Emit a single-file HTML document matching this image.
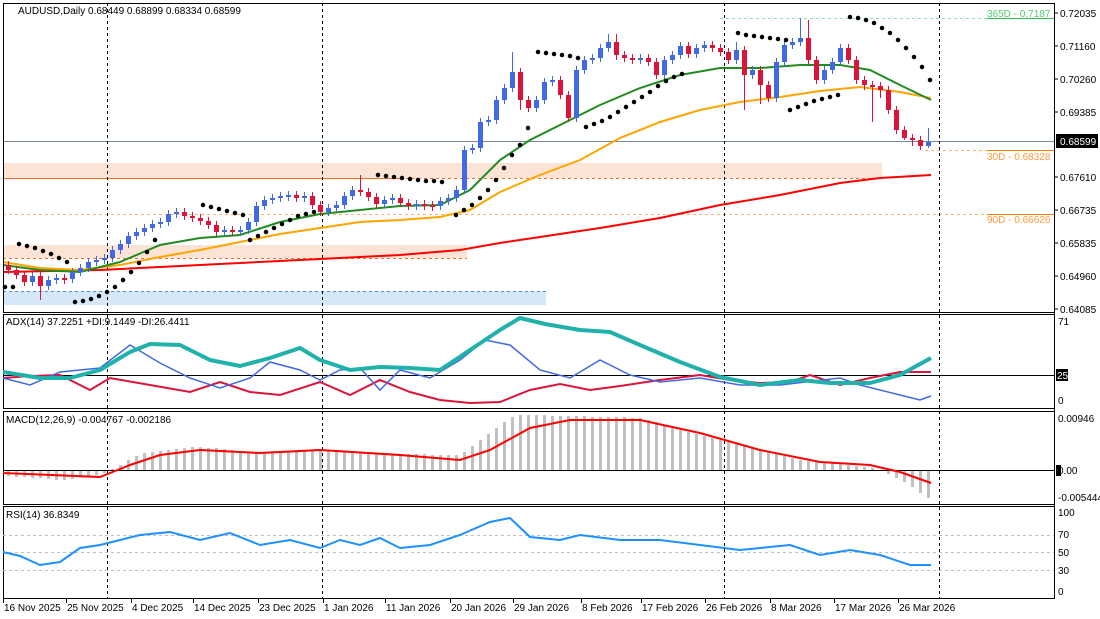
<!DOCTYPE html>
<html><head><meta charset="utf-8">
<style>
html,body{margin:0;padding:0;background:#fff;}
svg{display:block;font-family:"Liberation Sans",sans-serif;font-size:10px;}
</style></head>
<body>
<svg width="1100" height="619" viewBox="0 0 1100 619" xmlns="http://www.w3.org/2000/svg">
<rect x="0" y="0" width="1100" height="619" fill="#fff"/>
<!-- bands -->
<rect x="3" y="163" width="879" height="15" fill="#fbe3d6"/>
<rect x="3" y="245" width="464" height="13" fill="#fbe3d6"/>
<rect x="3" y="291" width="543" height="14" fill="#d6e7f8"/>
<line x1="3" y1="178.5" x2="400" y2="178.5" stroke="#f07030"/>
<line x1="400" y1="178.5" x2="882" y2="178.5" stroke="#f07030" stroke-dasharray="3,3"/>
<line x1="3" y1="258.5" x2="467" y2="258.5" stroke="#f07030" stroke-dasharray="3,3"/>
<line x1="3" y1="291.5" x2="546" y2="291.5" stroke="#4a90e0" stroke-dasharray="3,3"/>
<line x1="3" y1="214.5" x2="987" y2="214.5" stroke="#ffb070" stroke-dasharray="3,3"/>
<line x1="987" y1="214.5" x2="1054" y2="214.5" stroke="#ff8000"/>
<line x1="925" y1="150.5" x2="987" y2="150.5" stroke="#ffb070" stroke-dasharray="3,3"/>
<line x1="987" y1="150.5" x2="1054" y2="150.5" stroke="#ff8000"/>
<line x1="720" y1="18.5" x2="987" y2="18.5" stroke="#90e0a8" stroke-dasharray="3,3"/>
<line x1="987" y1="18.5" x2="1054" y2="18.5" stroke="#30c050"/>
<line x1="3" y1="141.5" x2="1054" y2="141.5" stroke="#778899"/>
<!-- vertical dashed -->
<g stroke="#000" stroke-dasharray="3,3">
<line x1="107.5" y1="3" x2="107.5" y2="598"/>
<line x1="322.5" y1="3" x2="322.5" y2="598"/>
<line x1="724.5" y1="3" x2="724.5" y2="598"/>
<line x1="939.5" y1="3" x2="939.5" y2="598"/>
</g>
<!-- MAs -->
<polyline fill="none" stroke="#ff0000" stroke-width="2" points="3,272 100,270 200,265 300,260 400,255 460,250 500,243 540,237 600,228 660,218 720,205 780,195 840,183 880,178 931,175"/>
<polyline fill="none" stroke="#ffa500" stroke-width="2" points="3,262 40,268 80,270 120,265 160,257 200,250 240,242 280,234 320,228 360,222 400,220 440,217 470,210 500,192 540,175 580,160 620,138 660,122 700,110 740,102 780,97 820,91 860,87 900,92 931,98"/>
<polyline fill="none" stroke="#228b22" stroke-width="2" points="3,265 40,270 80,272 120,262 160,245 200,238 240,235 280,222 320,214 360,210 400,206 440,205 470,190 500,160 530,140 560,125 600,105 640,88 680,75 720,68 760,68 800,65 840,65 870,70 900,85 931,100"/>
<!-- wicks -->
<path fill="none" stroke="#4169e1" d="M32.5 272V286M48.5 276V290M56.5 274V284M72.5 268V283M80.5 264V276M88.5 258V272M96.5 256V266M104.5 254V264M112.5 246V262M120.5 240V254M128.5 232V248M136.5 228V240M144.5 224V236M152.5 220V232M160.5 218V228M168.5 210V226M176.5 208V218M224.5 226V236M240.5 226V236M248.5 218V234M256.5 202V226M264.5 196V210M272.5 194V204M280.5 192V202M288.5 191V201M304.5 192V202M328.5 204V216M336.5 201V212M344.5 192V209M352.5 186V200M384.5 196V208M392.5 194V204M416.5 200V210M440.5 197V210M448.5 194V205M456.5 186V202M464.5 146V194M472.5 144V154M480.5 118V152M488.5 116V126M496.5 96V124M504.5 84V104M512.5 52V92M536.5 96V112M544.5 78V104M552.5 76V86M576.5 66V122M584.5 56V74M592.5 54V64M600.5 44V62M608.5 34V52M640.5 54V64M664.5 56V79M672.5 51V64M680.5 42V59M696.5 44V58M704.5 41V52M736.5 42V64M752.5 66V79M776.5 58V102M784.5 41V66M792.5 38V49M800.5 18V46M824.5 66V84M832.5 58V74M840.5 44V66M928.5 128V148"/>
<path fill="none" stroke="#dc143c" d="M8.5 261V274M16.5 266V279M24.5 271V286M40.5 272V300M64.5 274V284M184.5 208V220M192.5 212V222M200.5 214V225M208.5 217V229M216.5 221V236M232.5 226V236M296.5 191V202M312.5 192V209M320.5 201V216M360.5 175V196M368.5 188V201M376.5 193V208M400.5 194V207M408.5 199V210M424.5 200V210M432.5 201V211M520.5 68V110M528.5 96V112M560.5 76V99M568.5 91V122M616.5 34V60M624.5 51V62M632.5 54V64M648.5 54V66M656.5 58V79M688.5 42V58M712.5 41V52M720.5 44V56M728.5 48V64M744.5 46V110M760.5 66V104M768.5 81V102M808.5 20V64M816.5 56V84M848.5 44V64M856.5 56V84M864.5 76V90M872.5 81V122M880.5 82V98M888.5 86V114M896.5 106V134M904.5 126V140M912.5 134V146M920.5 136V150"/>
<!-- bodies -->
<path fill="#4169e1" d="M30 276h5v6h-5zM46 280h5v6h-5zM54 278h5v2h-5zM70 272h5v7h-5zM78 268h5v4h-5zM86 262h5v6h-5zM94 260h5v2h-5zM102 258h5v2h-5zM110 250h5v8h-5zM118 244h5v6h-5zM126 236h5v8h-5zM134 232h5v4h-5zM142 228h5v4h-5zM150 224h5v4h-5zM158 222h5v2h-5zM166 214h5v8h-5zM174 212h5v2h-5zM222 230h5v2h-5zM238 230h5v2h-5zM246 222h5v8h-5zM254 206h5v16h-5zM262 200h5v6h-5zM270 198h5v2h-5zM278 196h5v2h-5zM286 195h5v2h-5zM302 196h5v2h-5zM326 208h5v4h-5zM334 205h5v3h-5zM342 196h5v9h-5zM350 190h5v6h-5zM382 200h5v4h-5zM390 198h5v2h-5zM414 204h5v2h-5zM438 201h5v5h-5zM446 198h5v3h-5zM454 190h5v8h-5zM462 150h5v40h-5zM470 148h5v2h-5zM478 122h5v26h-5zM486 120h5v2h-5zM494 100h5v20h-5zM502 88h5v12h-5zM510 72h5v16h-5zM534 100h5v8h-5zM542 82h5v18h-5zM550 80h5v2h-5zM574 70h5v48h-5zM582 60h5v10h-5zM590 58h5v2h-5zM598 48h5v10h-5zM606 42h5v6h-5zM638 58h5v2h-5zM662 60h5v15h-5zM670 55h5v5h-5zM678 46h5v9h-5zM694 48h5v6h-5zM702 45h5v3h-5zM734 50h5v10h-5zM750 70h5v5h-5zM774 62h5v36h-5zM782 45h5v17h-5zM790 42h5v3h-5zM798 38h5v4h-5zM822 70h5v10h-5zM830 62h5v8h-5zM838 48h5v14h-5zM926 142h5v4h-5z"/>
<path fill="#dc143c" d="M6 265h5v5h-5zM14 270h5v5h-5zM22 275h5v7h-5zM38 276h5v10h-5zM62 278h5v2h-5zM182 212h5v4h-5zM190 216h5v2h-5zM198 218h5v3h-5zM206 221h5v4h-5zM214 225h5v7h-5zM230 230h5v2h-5zM294 195h5v3h-5zM310 196h5v9h-5zM318 205h5v7h-5zM358 190h5v2h-5zM366 192h5v5h-5zM374 197h5v7h-5zM398 198h5v5h-5zM406 203h5v3h-5zM422 204h5v2h-5zM430 205h5v2h-5zM518 72h5v28h-5zM526 100h5v8h-5zM558 80h5v15h-5zM566 95h5v23h-5zM614 42h5v13h-5zM622 55h5v3h-5zM630 58h5v2h-5zM646 58h5v4h-5zM654 62h5v13h-5zM686 46h5v8h-5zM710 45h5v3h-5zM718 48h5v4h-5zM726 52h5v8h-5zM742 50h5v25h-5zM758 70h5v15h-5zM766 85h5v13h-5zM806 38h5v22h-5zM814 60h5v20h-5zM846 48h5v12h-5zM854 60h5v20h-5zM862 80h5v5h-5zM870 85h5v2h-5zM878 86h5v4h-5zM886 90h5v20h-5zM894 110h5v20h-5zM902 130h5v8h-5zM910 138h5v2h-5zM918 140h5v6h-5z"/>
<!-- SAR -->
<path fill="none" stroke="#000" stroke-width="4.5" stroke-linecap="round" d="M5 287h0M13 287h0M19 244h0M27 246h0M35 248h0M43 251h0M51 254h0M59 258h0M67 262h0M75 302h0M83 301h0M91 299h0M99 296h0M107 292h0M115 287h0M123 280h0M131 272h0M139 263h0M147 252h0M155 240h0M203 205h0M211 207h0M219 209h0M227 211h0M235 213h0M243 215h0M250 240h0M258 236h0M266 232h0M274 228h0M282 224h0M290 220h0M298 216h0M306 214h0M314 212h0M378 175h0M386 176h0M394 177h0M402 178h0M410 179h0M418 180h0M426 181h0M434 181h0M442 182h0M456 215h0M464 210h0M472 205h0M480 198h0M488 190h0M496 180h0M504 168h0M512 155h0M520 145h0M528 128h0M538 52h0M546 53h0M554 54h0M562 55h0M570 56h0M578 58h0M586 127h0M594 124h0M602 121h0M610 117h0M618 112h0M626 107h0M634 102h0M642 97h0M650 92h0M658 86h0M666 81h0M674 77h0M682 74h0M738 33h0M746 35h0M754 36h0M762 37h0M770 38h0M778 39h0M786 40h0M790 110h0M798 107h0M806 104h0M814 101h0M822 99h0M830 97h0M838 95h0M850 17h0M858 18h0M866 20h0M874 23h0M882 28h0M890 33h0M898 40h0M906 48h0M914 57h0M922 67h0M930 80h0"/>
<!-- right axis -->
<line x1="1054.5" y1="3" x2="1054.5" y2="598" stroke="#000"/>
<g fill="#000" stroke="#000">
<path d="M1054 13h4M1054 46h4M1054 79h4M1054 112h4M1054 177h4M1054 210h4M1054 243h4M1054 276h4M1054 309h4"/>
</g>
<g fill="#000">
<text x="1060" y="17">0.72035</text>
<text x="1060" y="50">0.71160</text>
<text x="1060" y="83">0.70260</text>
<text x="1060" y="116">0.69385</text>
<text x="1060" y="181">0.67610</text>
<text x="1060" y="214">0.66735</text>
<text x="1060" y="247">0.65835</text>
<text x="1060" y="280">0.64960</text>
<text x="1060" y="313">0.64085</text>
</g>
<rect x="1056" y="134" width="42" height="14" fill="#000"/><text x="1060" y="145" fill="#fff">0.68599</text>
<text x="987" y="17" fill="#50d070">365D - 0.7187</text>
<text x="987" y="160" fill="#ff9a40">30D - 0.68328</text>
<text x="987" y="223" fill="#ff9a40">90D - 0.66626</text>
<text x="18" y="14" fill="#000">AUDUSD,Daily  0.68449 0.68899 0.68334 0.68599</text>
<!-- frames -->
<g fill="none" stroke="#000">
<rect x="3.5" y="3.5" width="1051" height="309"/>
<rect x="3.5" y="314.5" width="1051" height="94"/>
<rect x="3.5" y="411.5" width="1051" height="93"/>
<rect x="3.5" y="506.5" width="1051" height="92"/>
</g>
<!-- ADX -->
<line x1="3" y1="375.5" x2="1054" y2="375.5" stroke="#000"/>
<polyline fill="none" stroke="#dc143c" stroke-width="2" points="3,378 30,376 60,375 90,390 110,378 150,385 190,392 220,382 250,392 280,395 320,382 350,395 380,380 410,392 440,400 470,403 500,402 530,390 560,384 590,390 620,386 660,380 700,375 730,380 760,383 790,382 810,375 840,385 870,378 900,372 931,372"/>
<polyline fill="none" stroke="#4169e1" stroke-width="1.5" points="3,378 30,385 60,372 100,368 130,345 160,363 190,378 220,388 250,378 270,362 300,370 320,380 340,370 360,368 380,390 400,370 430,378 460,360 485,340 510,345 540,370 570,378 600,360 630,375 660,382 700,378 740,385 780,385 840,378 860,385 900,395 920,400 931,396"/>
<polyline fill="none" stroke="#20b2aa" stroke-width="4" stroke-linejoin="round" points="3,372 40,378 70,378 100,370 130,352 150,344 180,345 210,360 240,366 270,358 300,348 320,360 350,370 380,367 410,368 440,370 470,350 500,330 520,318 545,324 580,330 610,332 640,345 680,362 720,377 760,385 800,380 830,383 870,383 900,375 931,358"/>
<text x="6" y="325" fill="#000">ADX(14) 37.2251 +DI:9.1449 -DI:26.4411</text>
<text x="1058" y="325" fill="#000">71</text>
<rect x="1056" y="369" width="12" height="12" fill="#000"/><text x="1057" y="379" fill="#fff">25</text>
<text x="1058" y="404" fill="#000">0</text>
<!-- MACD -->
<path fill="none" stroke="#c0c0c0" stroke-width="3" d="M8.5 470V476M16.5 470V477M24.5 470V477M32.5 470V478M40.5 470V478M48.5 470V479M56.5 470V480M64.5 470V480M72.5 470V479M80.5 470V477M88.5 470V476M96.5 470V475M104.5 470V473M112.5 470V469M120.5 470V465M128.5 470V460M136.5 470V456M144.5 470V453M152.5 470V452M160.5 470V451M168.5 470V450M176.5 470V449M184.5 470V448M192.5 470V447M200.5 470V447M208.5 470V448M216.5 470V448M224.5 470V449M232.5 470V450M240.5 470V451M248.5 470V452M256.5 470V452M264.5 470V452M272.5 470V451M280.5 470V451M288.5 470V451M296.5 470V451M304.5 470V450M312.5 470V450M320.5 470V450M328.5 470V450M336.5 470V450M344.5 470V451M352.5 470V451M360.5 470V452M368.5 470V452M376.5 470V453M384.5 470V453M392.5 470V454M400.5 470V454M408.5 470V454M416.5 470V454M424.5 470V454M432.5 470V455M440.5 470V455M448.5 470V455M456.5 470V455M464.5 470V452M472.5 470V446M480.5 470V440M488.5 470V434M496.5 470V428M504.5 470V422M512.5 470V417M520.5 470V415M528.5 470V415M536.5 470V415M544.5 470V415M552.5 470V416M560.5 470V416M568.5 470V416M576.5 470V416M584.5 470V416M592.5 470V417M600.5 470V417M608.5 470V417M616.5 470V417M624.5 470V417M632.5 470V418M640.5 470V418M648.5 470V420M656.5 470V422M664.5 470V425M672.5 470V428M680.5 470V430M688.5 470V432M696.5 470V434M704.5 470V436M712.5 470V438M720.5 470V440M728.5 470V442M736.5 470V444M744.5 470V446M752.5 470V448M760.5 470V450M768.5 470V452M776.5 470V454M784.5 470V456M792.5 470V458M800.5 470V460M808.5 470V461M816.5 470V462M824.5 470V462M832.5 470V463M840.5 470V464M848.5 470V465M856.5 470V466M864.5 470V467M872.5 470V468M888.5 470V474M896.5 470V478M904.5 470V482M912.5 470V487M920.5 470V493M928.5 470V498"/>
<line x1="3" y1="470.5" x2="1054" y2="470.5" stroke="#000"/>
<polyline fill="none" stroke="#ff0000" stroke-width="2" points="3,473 100,477 130,465 160,455 200,450 260,453 320,450 400,455 460,460 490,450 530,428 570,420 640,420 700,433 760,450 820,462 870,465 900,472 931,483"/>
<text x="6" y="423" fill="#000">MACD(12,26,9) -0.004767 -0.002186</text>
<text x="1058" y="422" fill="#000">0.00946</text>
<rect x="1056" y="465" width="5" height="11" fill="#000"/><text x="1058" y="474" fill="#000">0.00</text>
<text x="1058" y="501" fill="#000">-0.005444</text>
<!-- RSI -->
<g stroke="#c0c0c0" stroke-dasharray="3,3">
<line x1="3" y1="535.5" x2="1054" y2="535.5"/>
<line x1="3" y1="552.5" x2="1054" y2="552.5"/>
<line x1="3" y1="570.5" x2="1054" y2="570.5"/>
</g>
<polyline fill="none" stroke="#1e90ff" stroke-width="2" points="3,552 20,556 40,565 60,562 80,548 100,545 120,540 140,535 170,532 200,540 230,533 260,545 290,540 320,548 340,540 360,545 380,538 400,548 430,545 460,535 490,522 510,518 530,537 560,540 580,535 620,540 660,540 700,545 740,550 790,545 820,555 850,550 880,555 910,565 931,565"/>
<text x="6" y="518" fill="#000">RSI(14) 36.8349</text>
<g fill="#000">
<text x="1058" y="516">100</text><text x="1058" y="538">70</text><text x="1058" y="556">50</text><text x="1058" y="574">30</text><text x="1058" y="595">0</text>
</g>
<!-- dates -->
<path stroke="#000" d="M3.5 598V603M66.5 598V603M131.5 598V603M193.5 598V603M258.5 598V603M323.5 598V603M385.5 598V603M450.5 598V603M513.5 598V603M581.5 598V603M641.5 598V603M705.5 598V603M770.5 598V603M834.5 598V603M898.5 598V603"/>
<g fill="#000">
<text x="4" y="611">16 Nov 2025</text>
<text x="67" y="611">25 Nov 2025</text>
<text x="132" y="611">4 Dec 2025</text>
<text x="194" y="611">14 Dec 2025</text>
<text x="259" y="611">23 Dec 2025</text>
<text x="324" y="611">1 Jan 2026</text>
<text x="386" y="611">11 Jan 2026</text>
<text x="451" y="611">20 Jan 2026</text>
<text x="514" y="611">29 Jan 2026</text>
<text x="582" y="611">8 Feb 2026</text>
<text x="642" y="611">17 Feb 2026</text>
<text x="706" y="611">26 Feb 2026</text>
<text x="771" y="611">8 Mar 2026</text>
<text x="835" y="611">17 Mar 2026</text>
<text x="899" y="611">26 Mar 2026</text>
</g>
</svg>
</body></html>
